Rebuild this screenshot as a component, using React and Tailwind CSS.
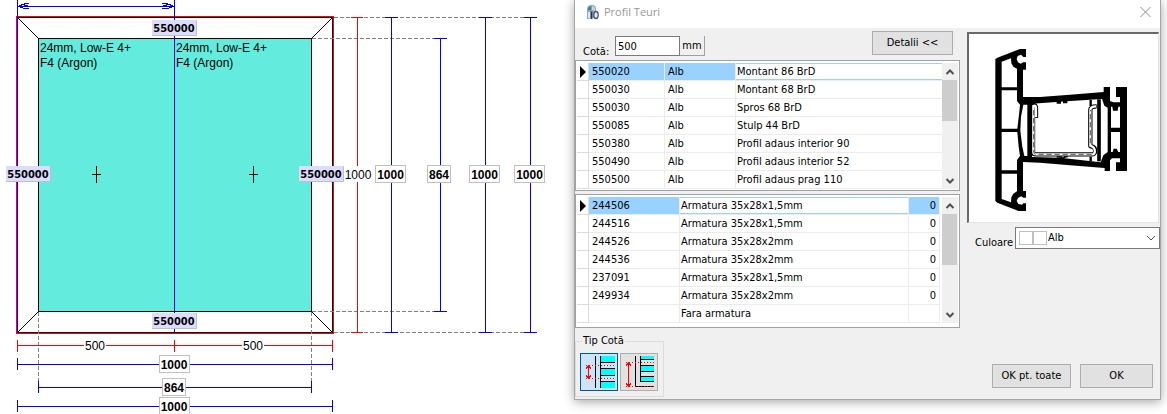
import React from 'react';

const PROFILES = [
  { code: '550020', color: 'Alb', name: 'Montant 86 BrD' },
  { code: '550030', color: 'Alb', name: 'Montant 68 BrD' },
  { code: '550030', color: 'Alb', name: 'Spros 68 BrD' },
  { code: '550085', color: 'Alb', name: 'Stulp 44 BrD' },
  { code: '550380', color: 'Alb', name: 'Profil adaus interior 90' },
  { code: '550490', color: 'Alb', name: 'Profil adaus interior 52' },
  { code: '550500', color: 'Alb', name: 'Profil adaus prag 110' },
];

const REINFORCEMENTS = [
  { code: '244506', name: 'Armatura 35x28x1,5mm', qty: 0 },
  { code: '244516', name: 'Armatura 35x28x1,5mm', qty: 0 },
  { code: '244526', name: 'Armatura 35x28x2mm', qty: 0 },
  { code: '244536', name: 'Armatura 35x28x2mm', qty: 0 },
  { code: '237091', name: 'Armatura 35x28x1,5mm', qty: 0 },
  { code: '249934', name: 'Armatura 35x28x2mm', qty: 0 },
  { code: '', name: 'Fara armatura', qty: '' },
];

// Vertical dimension lines, right of the frame
const V_DIMS = [
  { x: 391, y1: 17, y2: 332, label: '1000' },
  { x: 440, y1: 38, y2: 311, label: '864' },
  { x: 485, y1: 17, y2: 332, label: '1000' },
  { x: 530, y1: 17, y2: 332, label: '1000' },
];

// Horizontal dimension lines, under the frame
const H_DIMS = [
  { y: 364, x1: 17, x2: 332, label: '1000' },
  { y: 387, x1: 38, x2: 311, label: '864' },
  { y: 406, x1: 17, x2: 332, label: '1000' },
];

const CODE_TAGS = [
  { x: 152, y: 20 },
  { x: 6, y: 166 },
  { x: 299, y: 166 },
  { x: 152, y: 313 },
];

function DimLabel({ cx, cy, text }) {
  const w = text.length > 3 ? 30 : 23;
  return (
    <g>
      <rect x={cx - w / 2} y={cy - 8.5} width={w} height={17} fill="#fff" stroke="#c0c0c0" />
      <text x={cx} y={cy + 5} textAnchor="middle" className="text-[12px] font-bold">{text}</text>
    </g>
  );
}

function WindowDrawing() {
  return (
    <svg width="568" height="414" viewBox="0 0 568 414" className="block flex-none font-['Liberation_Sans',Arial,sans-serif]" shapeRendering="crispEdges">
      {/* frame and glass */}
      <rect x="16.5" y="16.5" width="317" height="317" fill="#fff" stroke="#ff0000" />
      <rect x="17.5" y="17.5" width="315" height="315" fill="none" stroke="#000" />
      <rect x="38.5" y="38.5" width="273" height="273" fill="#63ecdd" stroke="#000" />
      <path d="M17.5 17.5L38.5 38.5M332.5 17.5L311.5 38.5M17.5 332.5L38.5 311.5M332.5 332.5L311.5 311.5" stroke="#000" fill="none" shapeRendering="auto" />

      {/* helper lines */}
      <path d="M334 17.5H530M312 38.5H440M312 311.5H440M334 332.5H530M38.5 312V387M311.5 312V387" stroke="#808080" strokeDasharray="4 2" fill="none" />

      {/* middle axis and top dimension */}
      <path d="M17.5 0V332M174.5 0V332M17 6.5H174" stroke="#0000ff" fill="none" />
      <path d="M29 3.5H25L18 6.5L25 8.5H29M23 4.5L29 6.5M162 3.5H167L174 6.5L167 8.5H162M168 4.5L162 6.5" stroke="#0000ff" fill="none" />

      <path d="M92 174.5H101M96.5 166V183M249 174.5H258M253.5 166V183" stroke="#000" fill="none" />
      <g className="text-[12px]">
        <text x="40" y="52">24mm, Low-E 4+</text>
        <text x="40" y="67">F4 (Argon)</text>
        <text x="176" y="52">24mm, Low-E 4+</text>
        <text x="176" y="67">F4 (Argon)</text>
      </g>

      {/* red dimensions */}
      <path d="M357.5 17V332M351 17.5H363M351 332.5H363M17 345.5H332M17.5 340V352M174.5 340V352M332.5 340V352" stroke="#ff0000" fill="none" />
      <rect x="344" y="166" width="27" height="16" fill="#fff" />
      <rect x="84" y="338" width="22" height="14" fill="#fff" />
      <rect x="242" y="338" width="22" height="14" fill="#fff" />
      <g className="text-[12px]" textAnchor="middle">
        <text x="358" y="179">1000</text>
        <text x="95" y="350">500</text>
        <text x="253" y="350">500</text>
      </g>

      {V_DIMS.map((d) => (
        <g key={d.x}>
          <path d={`M${d.x + 0.5} ${d.y1}V${d.y2}M${d.x - 6} ${d.y1 + 0.5}h13M${d.x - 6} ${d.y2 + 0.5}h13`} stroke="#0000ff" fill="none" />
          <DimLabel cx={d.label === '864' ? 439 : d.x - 0.5} cy={174} text={d.label} />
        </g>
      ))}
      {H_DIMS.map((d) => (
        <g key={d.y}>
          <path d={`M${d.x1} ${d.y + 0.5}H${d.x2}M${d.x1 + 0.5} ${d.y - 6}v12M${d.x2 + 0.5} ${d.y - 6}v12`} stroke="#0000ff" fill="none" />
          <DimLabel cx={174} cy={d.y} text={d.label} />
        </g>
      ))}

      {CODE_TAGS.map((t) => (
        <g key={`${t.x}-${t.y}`}>
          <rect x={t.x} y={t.y} width="45" height="16" fill="#dcdcff" />
          <path d={`M${t.x} ${t.y + 15.5}h44.5v-15.5`} stroke="#c0c0c0" fill="none" />
          <text x={t.x + 22} y={t.y + 12} textAnchor="middle" className="font-['DejaVu_Sans_Condensed','DejaVu_Sans',sans-serif] text-[11px] font-bold">550000</text>
        </g>
      ))}
    </svg>
  );
}

function AppIcon() {
  return (
    <svg width="16" height="16" viewBox="0 0 16 16" aria-hidden="true">
      <path d="M2 15V5Q2 1 7 1Q11 1 11 5V14Z" fill="#8fa3b3" />
      <path d="M3 5Q4 2 6 2V6H3Z" fill="#2a7fb8" />
      <path d="M7 2Q10 2 10 5V7L7 6Z" fill="#c5d3dd" />
      <path d="M3 8H5V14H3Z" fill="#dfe8ee" />
      <path d="M6.500 7.500V15" stroke="#26384a" strokeWidth="1.500" />
      <ellipse cx="11" cy="11" rx="2.200" ry="3.500" fill="#e8edf1" stroke="#4a5a68" strokeWidth="1.300" />
    </svg>
  );
}

function ScrollBar({ thumb }) {
  return (
    <div className="flex w-4 flex-none flex-col bg-[#f0f0f0]" aria-hidden="true">
      <svg width="16" height="17" viewBox="0 0 16 17" className="flex-none">
        <path d="M4.500 11L8 7.500L11.500 11" stroke="#505050" strokeWidth="2" fill="none" />
      </svg>
      <div className={`mr-px bg-[#cdcdcd] ${thumb}`} />
      <svg width="16" height="17" viewBox="0 0 16 17" className="mt-auto flex-none">
        <path d="M4.500 7L8 10.500L11.500 7" stroke="#505050" strokeWidth="2" fill="none" />
      </svg>
    </div>
  );
}

function RowMarker({ active }) {
  return (
    <td className="border-r border-b border-[#dcdcdc] p-0">
      {active && (
        <svg width="11" height="12" viewBox="0 0 11 12" className="block">
          <path d="M3 0L9 6L3 12Z" fill="#000" />
        </svg>
      )}
    </td>
  );
}

const CELL = 'border-b border-[#ececec] p-0 whitespace-nowrap';

function ProfileTable() {
  return (
    <div className="flex border border-[#a0a0a8] bg-white px-px pt-0.5 pb-px">
      <table className="flex-1 table-fixed border-separate border-spacing-0 leading-4">
        <colgroup>
          <col className="w-3" />
          <col className="w-[76px]" />
          <col className="w-[71px]" />
          <col />
        </colgroup>
        <tbody>
          {PROFILES.map((row, i) => (
            <tr key={i} className="h-[18px]">
              <RowMarker active={i === 0} />
              <td className={`${CELL} border-r pl-[3px] ${i === 0 ? 'bg-[#99d1ff]' : ''}`}>{row.code}</td>
              <td className={`${CELL} border-r pl-[3px] ${i === 0 ? 'bg-[#99d1ff]' : ''}`}>{row.color}</td>
              <td className={`${CELL} pl-px ${i === 0 ? 'shadow-[inset_0_1px_#99d1ff,inset_0_-1px_#99d1ff]' : ''}`}>{row.name}</td>
            </tr>
          ))}
        </tbody>
      </table>
      <ScrollBar thumb="h-[41px]" />
    </div>
  );
}

function ReinforcementTable() {
  return (
    <div className="flex border border-[#a0a0a8] bg-white px-px pt-0.5 pb-1">
      <table className="mr-0.5 flex-1 table-fixed border-separate border-spacing-0 leading-4">
        <colgroup>
          <col className="w-3" />
          <col className="w-[91px]" />
          <col />
          <col className="w-[31px]" />
        </colgroup>
        <tbody>
          {REINFORCEMENTS.map((row, i) => (
            <tr key={i} className="h-[18px]">
              <RowMarker active={i === 0} />
              <td className={`${CELL} border-r pl-[3px] ${i === 0 ? 'bg-[#99d1ff]' : ''}`}>{row.code}</td>
              <td className={`${CELL} border-r pl-px ${i === 0 ? 'shadow-[inset_0_1px_#99d1ff,inset_0_-1px_#99d1ff]' : ''}`}>{row.name}</td>
              <td className={`${CELL} border-r pr-[3px] text-right ${i === 0 ? 'bg-[#99d1ff]' : ''}`}>{row.qty}</td>
            </tr>
          ))}
        </tbody>
      </table>
      <ScrollBar thumb="h-[51px]" />
    </div>
  );
}

// Cross-section of the selected profile
function ProfileSection() {
  return (
    <svg viewBox="27 102 567 564" className="block w-full" fill="none" stroke="#000">
      <path fill="#000" stroke="none" fillRule="evenodd" d="M106 178L112 173L180 147H198V171H190L183 164L173 168L170 178L174 187L182 191L190 187H198V209H189V291L240 291L330 284L431 276V261H450V303L460 307H480V291H468V261H501V513H468V487H480V475H456L450 481V513H434V504L330 496L240 488L189 486V573H198V593H190L184 589L174 594L170 603L175 612L186 614L190 610H198V633H175L112 608L106 603ZM125 185V262H171V206L160 200L154 190L153 175ZM125 271V386H172L178 335L180 314L171 303V271ZM125 396V511H171V480L180 468L176 440L172 396ZM125 521V597L153 607L154 592L160 581L171 574V521ZM190 314L183 350L181 392L187 440L193 468H202V314ZM216 311V471L300 473L422 487L430 466L443 456V323L433 317L426 297L320 304ZM453 320V383H480V320H475L473 332H459L457 320ZM453 396V456H458L461 446H470L475 456H480V396Z" />
      {/* chamber walls */}
      <path strokeWidth="11" d="M417 298V484" />
      <path strokeWidth="7" d="M392 300V318M392 470V484" />
      <path strokeWidth="8" d="M290 307H303M309 306H322" />
      <path strokeWidth="5" d="M290 471H304L308 476L316 470H323" />
      {/* steel insert */}
      <path strokeWidth="13" strokeLinejoin="round" d="M228 354V324Q228 313 219 316V455Q219 463 229 463H398Q407 462 405 448Q403 440 391 438V330Q391 319 410 319" />
      <path stroke="#fff" strokeWidth="7" d="M228 352V324Q228 315 220 318V455Q220 463 229 463H398Q406 462 404 449Q402 441 391 437V330Q391 319 408 319" />
      <path strokeWidth="2" strokeDasharray="16 8" d="M221 330V455Q221 463 229 463H398M391 430V330" />
    </svg>
  );
}

function DimTypeInner() {
  return (
    <svg width="36" height="36" viewBox="0 0 36 36" shapeRendering="crispEdges" aria-hidden="true">
      <path d="M20 2H34V8H20ZM20 14H34V21H20ZM20 28H34V34H20Z" fill="#00ffff" />
      <path d="M14.500 2V34M19.500 2V34M20 8.500H34M20 14.500H34M20 21.500H34M20 27.500H34" stroke="#000" />
      <path d="M5 11.500H34M5 24.500H34" stroke="#ff0000" strokeDasharray="1 2" />
      <path d="M7.500 12V24M5 14.500L7.500 12L10 14.500M5 21.500L7.500 24L10 21.500" stroke="#ff0000" fill="none" />
    </svg>
  );
}

function DimTypeOuter() {
  return (
    <svg width="36" height="36" viewBox="0 0 36 36" shapeRendering="crispEdges" aria-hidden="true">
      <path d="M20 2H33V5H20ZM20 11H33V17H20ZM20 23H33V27H20Z" fill="#00ffff" />
      <path d="M14.500 2V32.500H33M19.500 2V27.500H33M20 5.500H33M20 11.500H33M20 17.500H33M20 22.500H33" stroke="#000" fill="none" />
      <path d="M5 8.500H33M5 32.500H33" stroke="#ff0000" strokeDasharray="1 2" />
      <path d="M7.500 9V32M5 11.500L7.500 9L10 11.500M5 29.500L7.500 32L10 29.500" stroke="#ff0000" fill="none" />
    </svg>
  );
}

const BUTTON = 'border border-[#adadad] bg-[#e1e1e1] h-6 text-center leading-4';

function ProfileDialog() {
  return (
    <section className="mr-1.5 ml-1.5 flex flex-1 flex-col self-start border-x border-b border-[#a5a5a5] bg-[#f0f0f0] shadow-[0_2px_10px_rgba(0,0,0,0.35)]">
      <header className="flex h-7 items-center bg-white pr-2 pb-1 pl-2.5">
        <AppIcon />
        <h1 className="ml-[3px] font-['Open_Sans','Noto_Sans',sans-serif] text-[11px] leading-4 text-[#999]">Profil Teuri</h1>
        <button type="button" aria-label="Close" className="ml-auto">
          <svg width="13" height="12" viewBox="0 0 13 12" className="block">
            <path d="M1.500 1L11.500 11M11.500 1L1.500 11" stroke="#8a8a8a" />
          </svg>
        </button>
      </header>

      <div className="flex">
        <div className="w-[385px] flex-none">
          <div className="flex h-8 items-start pr-[7px] pl-2">
            <label htmlFor="cota" className="mt-4 w-8 leading-4">Cotă:</label>
            <input id="cota" type="text" defaultValue="500" className="mt-2 h-5 w-[65px] border border-[#7a7a7a] bg-white px-0.5 leading-4" />
            <button type="button" className="mt-2 h-5 w-[25px] border-r border-b border-[#a0a0a0] leading-4">mm</button>
            <button type="button" className={`${BUTTON} mt-[3px] ml-auto w-[81px]`}>Detalii &lt;&lt;</button>
          </div>
          <div className="flex flex-col gap-[3px]">
            <ProfileTable />
            <ReinforcementTable />
          </div>
          <fieldset className="mt-[5px] mb-0.5 w-[89px] border border-[#dcdcdc] px-1 pb-[5px]">
            <legend className="ml-0.5 px-px leading-4">Tip Cotă</legend>
            <div className="mt-1 flex gap-0.5">
              <button type="button" aria-label="Cotă interioară" className="border border-[#00559b] bg-[#cce4f7]"><DimTypeInner /></button>
              <button type="button" aria-label="Cotă exterioară" className="border border-[#adadad] bg-[#e1e1e1]"><DimTypeOuter /></button>
            </div>
          </fieldset>
        </div>

        <div className="flex flex-1 flex-col pt-1 pl-[7px]">
          <div className="mr-px border-t-2 border-r border-b border-l-2 border-t-[#696969] border-r-[#e3e3e3] border-b-[#e3e3e3] border-l-[#696969] bg-white">
            <ProfileSection />
          </div>
          <div className="mt-1 flex items-start pl-2">
            <label htmlFor="culoare" className="mt-2 w-10 flex-none leading-4">Culoare</label>
            <div className="relative flex-1">
              <select id="culoare" className="h-[22px] w-full appearance-none border border-[#7a7a7a] bg-white pl-8 leading-4">
                <option>Alb</option>
              </select>
              <span className="pointer-events-none absolute top-1 left-1 flex">
                <span className="h-3.5 w-3.5 border border-[#c0c0c0]" />
                <span className="h-3.5 w-3.5 border border-[#c0c0c0]" />
              </span>
              <svg width="10" height="6" viewBox="0 0 10 6" className="pointer-events-none absolute top-2 right-1">
                <path d="M1 1L5 5L9 1" stroke="#505050" fill="none" />
              </svg>
            </div>
          </div>
          <div className="mt-auto mb-[11px] flex justify-end gap-[9px] pr-[7px]">
            <button type="button" className={`${BUTTON} w-[79px]`}>OK pt. toate</button>
            <button type="button" className={`${BUTTON} w-[73px]`}>OK</button>
          </div>
        </div>
      </div>
    </section>
  );
}

export default function App() {
  return (
    <main className="flex overflow-hidden bg-white font-['DejaVu_Sans_Condensed','DejaVu_Sans',sans-serif] text-[11px] text-black">
      <WindowDrawing />
      <ProfileDialog />
    </main>
  );
}
